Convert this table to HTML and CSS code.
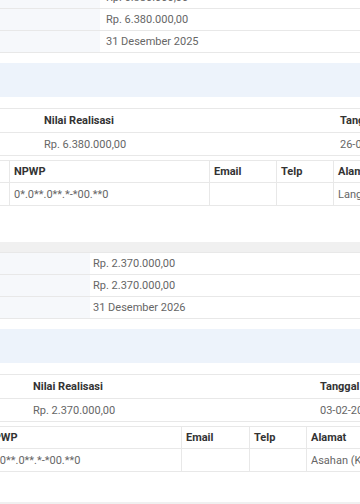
FILE: index.html
```html
<!DOCTYPE html>
<html lang="id">
<head>
<meta charset="utf-8">
<link rel="stylesheet" href="styles.css">
</head>
<body>
<div class="page">
  <section class="sec sec1">
    <div class="kv kv1">
      <div class="kv-row"><div class="kv-label"></div><div class="kv-val">Rp. 6.380.000,00</div></div>
      <div class="kv-row"><div class="kv-label"></div><div class="kv-val">Rp. 6.380.000,00</div></div>
      <div class="kv-row"><div class="kv-label"></div><div class="kv-val">31 Desember 2025</div></div>
    </div>
    <div class="band"></div>
    <div class="real real1">
      <div class="real-row head"><span></span><span>Nilai Realisasi</span><span>Tanggal</span></div>
      <div class="real-row"><span></span><span>Rp. 6.380.000,00</span><span>26-01-2025</span></div>
    </div>
    <div class="tbl tbl1">
      <div class="tbl-row head"><span></span><span>NPWP</span><span>Email</span><span>Telp</span><span>Alamat</span></div>
      <div class="tbl-row"><span></span><span>0*.0**.0**.*-*00.**0</span><span></span><span></span><span>Langkat</span></div>
    </div>
  </section>
  <div class="sep"></div>
  <section class="sec sec2">
    <div class="kv kv2">
      <div class="kv-row"><div class="kv-label"></div><div class="kv-val">Rp. 2.370.000,00</div></div>
      <div class="kv-row"><div class="kv-label"></div><div class="kv-val">Rp. 2.370.000,00</div></div>
      <div class="kv-row"><div class="kv-label"></div><div class="kv-val">31 Desember 2026</div></div>
    </div>
    <div class="band"></div>
    <div class="real real2">
      <div class="real-row head"><span></span><span>Nilai Realisasi</span><span>Tanggal</span></div>
      <div class="real-row"><span></span><span>Rp. 2.370.000,00</span><span>03-02-2026</span></div>
    </div>
    <div class="tbl tbl2">
      <div class="tbl-row head"><span></span><span>NPWP</span><span>Email</span><span>Telp</span><span>Alamat</span></div>
      <div class="tbl-row"><span></span><span>0*.0**.0**.*-*00.**0</span><span></span><span></span><span>Asahan (Kisaran)</span></div>
    </div>
  </section>
  <div class="sep"></div>
</div>
</body>
</html>
```

FILE: styles.css
```css
* { box-sizing: border-box; }
html, body {
  margin: 0;
  padding: 0;
  background: #ffffff;
  overflow: hidden;
}
body {
  width: 360px;
  height: 504px;
  font-family: Roboto, "Liberation Sans", sans-serif;
  font-size: 11px;
  color: #666666;
}
.page {
  width: 360px;
  overflow: hidden;
}
.sec1 { margin-top: -13px; padding-bottom: 36px; }
.sec2 { padding-bottom: 30px; }

.kv-row {
  display: grid;
  height: 22px;
  border-bottom: 1px solid #e8e8e8;
}
.kv1 .kv-row { grid-template-columns: 100px 1fr; }
.kv2 .kv-row { grid-template-columns: 90px 1fr; }
.kv2 { border-top: 1px solid #e8e8e8; }
.kv-label { background: #f6f8fb; }
.kv-val {
  display: flex;
  align-items: center;
  padding-left: 6px;
  white-space: nowrap;
}
.kv2 .kv-val { padding-left: 3px; }

.band {
  height: 34px;
  margin-top: 10px;
  background: #edf3fb;
}

.real {
  margin-top: 11px;
  border-top: 1px solid #e8e8e8;
}
.real-row {
  display: grid;
  height: 23px;
  border-bottom: 1px solid #e8e8e8;
  white-space: nowrap;
}
.real-row span {
  display: flex;
  align-items: center;
  padding-left: 4px;
}
.real-row.head { height: 24px; color: #333333; font-weight: 700; }
.real1 .real-row { grid-template-columns: 40px 296px 1fr; }
.real2 .real-row { grid-template-columns: 29px 287px 1fr; }

.tbl {
  margin-top: 4px;
  border-top: 1px solid #e8e8e8;
}
.tbl1 { margin-left: -30px; }
.tbl2 { margin-left: -58px; }
.tbl-row {
  display: grid;
  grid-template-columns: 40px 200px 67px 57px 120px;
  height: 23px;
  border-bottom: 1px solid #e8e8e8;
  white-space: nowrap;
}
.tbl-row.head { height: 22px; color: #333333; font-weight: 700; }
.tbl-row span {
  display: flex;
  align-items: center;
  padding-left: 4px;
  border-right: 1px solid #e8e8e8;
  overflow: hidden;
}
.tbl-row span:last-child { border-right: 0; }
.tbl2 .tbl-row { grid-template-columns: 40px 200px 68px 57px 120px; }

.sep {
  height: 10px;
  background: #f0f0f0;
}
```
